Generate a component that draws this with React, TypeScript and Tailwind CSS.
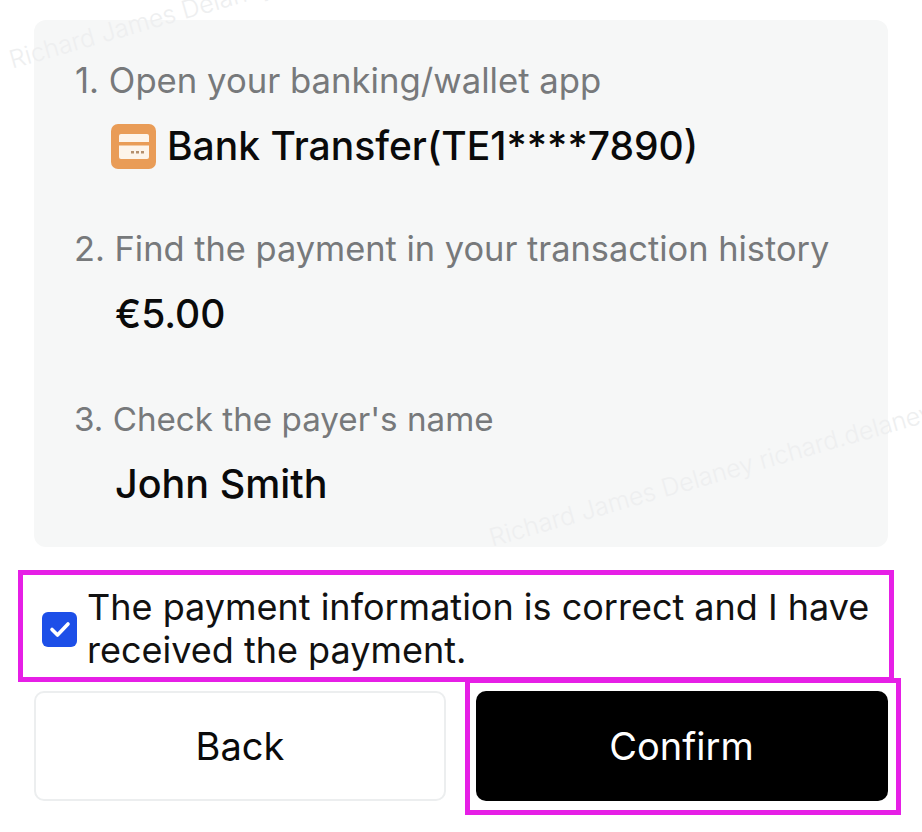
export default function App() {
  const font = { fontFamily: 'Inter, sans-serif' };
  return (
    <div style={font} className="relative w-[922px] h-[832px] overflow-hidden bg-white px-[34px] pt-[20px]">
      <div className="w-[854px] h-[527px] rounded-[12px] bg-[#f6f7f7] pl-[41px] pt-[38px]">
        <div className="text-[34.7px] leading-[44px] text-[#77797b]">1. Open your banking/wallet app</div>
        <div className="mt-[21px] ml-[36px] flex items-center gap-[11px] h-[46px]">
          <div className="w-[45px] h-[45px] rounded-[7px] bg-[#e99c57] flex items-center justify-center">
            <svg width="30" height="25" viewBox="0 0 30 25">
              <rect x="0" y="0" width="30" height="25" rx="2" fill="#fdf4ea" />
              <rect x="0" y="8" width="30" height="3.5" fill="#e99c57" />
              <rect x="12" y="17" width="3" height="2.5" fill="#b58f6c" />
              <rect x="17" y="17" width="3" height="2.5" fill="#b58f6c" />
              <rect x="22" y="17" width="3" height="2.5" fill="#b58f6c" />
            </svg>
          </div>
          <span className="text-[39px] leading-[46px] font-medium text-[#0a0a0a]">Bank Transfer(TE1****7890)</span>
        </div>
        <div className="mt-[58px] -ml-[1px] text-[34.4px] leading-[44px] text-[#77797b]">2. Find the payment in your transaction history</div>
        <div className="mt-[20px] ml-[40px] text-[39px] leading-[46px] font-medium text-[#0a0a0a]">€5.00</div>
        <div className="mt-[60px] -ml-[1px] text-[33.2px] leading-[44px] text-[#77797b]">3. Check the payer's name</div>
        <div className="mt-[20px] ml-[40px] text-[39.5px] leading-[46px] font-medium text-[#0a0a0a]">John Smith</div>
      </div>

      <div className="mt-[39px] ml-[8px] flex items-center gap-[10px] w-[840px]">
        <div className="w-[35px] h-[35px] shrink-0 rounded-[6px] bg-[#1d4fe8] flex items-center justify-center">
          <svg width="22" height="18" viewBox="0 0 22 18" fill="none">
            <path d="M3 9.5 L8.5 15 L19 4" stroke="white" strokeWidth="3.6" strokeLinecap="round" strokeLinejoin="round" />
          </svg>
        </div>
        <div className="text-[36px] leading-[43px] text-[#111111]">The payment information is correct and I have received the payment.</div>
      </div>

      <div className="mt-[19px] flex gap-[30px]">
        <button className="w-[412px] h-[110px] rounded-[10px] border-2 border-[#eceeef] bg-white text-[38px] text-[#0a0a0a]">Back</button>
        <button className="w-[412px] h-[110px] rounded-[10px] bg-black text-[38px] text-white pr-[1px]">Confirm</button>
      </div>

      <div className="absolute left-[18px] top-[570px] w-[876px] h-[112px] border-[5px] border-[#e61fe6]" />
      <div className="absolute left-[465px] top-[678px] w-[436px] h-[137px] border-[5px] border-[#e61fe6]" />

      <div className="absolute left-[10px] top-[42px] origin-left -rotate-[16deg] whitespace-nowrap text-[25px] font-light text-[#eeeff0]">Richard James Delaney</div>
      <div className="absolute left-[490px] top-[520px] origin-left -rotate-[16deg] whitespace-nowrap text-[25px] font-light text-[#eeeff0]">Richard James Delaney richard.delaney</div>
    </div>
  );
}
